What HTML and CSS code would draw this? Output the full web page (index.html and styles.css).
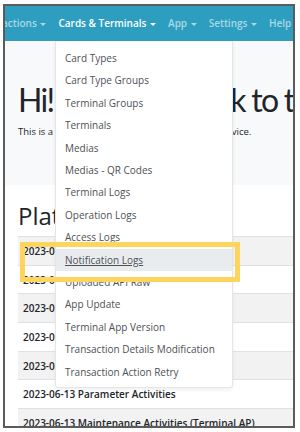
FILE: index.html
```html
<!DOCTYPE html>
<html lang="en">
<head>
  <meta charset="UTF-8" />
  <meta name="viewport" content="width=device-width, initial-scale=1.0" />
  <title>Platform Home</title>
  <link rel="stylesheet" href="styles.css">
</head>
<body>
  <div class="frame">
    <nav class="navbar">
      <ul class="nav">
        <li>Transactions <span class="caret"></span></li>
        <li class="active">Cards &amp; Terminals <span class="caret"></span></li>
        <li>App <span class="caret"></span></li>
        <li>Settings <span class="caret"></span></li>
        <li>Help</li>
      </ul>
    </nav>

    <div class="jumbotron">
      <h1>Hi! Welcome back to the platform</h1>
      <p>This is a management portal for the terminal service.</p>
    </div>

    <div class="updates">
      <h3>Platform Updates</h3>
      <table class="table">
        <tr><td>2023-07-05 Notification Logs</td></tr>
        <tr><td>2023-07-05 Uploaded API Raw</td></tr>
        <tr><td>2023-06-28 App Update</td></tr>
        <tr><td>2023-06-28 Terminal App Version</td></tr>
        <tr><td>2023-06-20 Transaction Retry</td></tr>
        <tr><td>2023-06-13 Parameter Activities</td></tr>
        <tr><td>2023-06-13 Maintenance Activities (Terminal AP)</td></tr>
      </table>
    </div>

    <div class="dropdown">
      <a>Card Types</a>
      <a>Card Type Groups</a>
      <a>Terminal Groups</a>
      <a>Terminals</a>
      <a>Medias</a>
      <a>Medias - QR Codes</a>
      <a>Terminal Logs</a>
      <a>Operation Logs</a>
      <a>Access Logs</a>
      <a class="hover">Notification Logs</a>
      <a>Uploaded API Raw</a>
      <a>App Update</a>
      <a>Terminal App Version</a>
      <a>Transaction Details Modification</a>
      <a>Transaction Action Retry</a>
    </div>

    <div class="callout"></div>
  </div>
</body>
</html>
```

FILE: styles.css
```css
:root {
  --teal: #2d9ebf;
  --text: #212529;
  --muted: #4d5156;
  --stripe: #f2f2f2;
  --border: #dee2e6;
}

* {
  box-sizing: border-box;
}

body {
  margin: 0;
  background: #ffffff;
  font-family: 'Open Sans', 'Noto Sans', sans-serif;
  color: var(--text);
}

.frame {
  position: relative;
  margin: 4px 5px 0 3px;
  height: 424px;
  border: 2px solid #5b5b5b;
  overflow: hidden;
  background: #ffffff;
}

.navbar {
  height: 35px;
  background: var(--teal);
  overflow: hidden;
}

.nav {
  display: flex;
  gap: 12px;
  margin: 0 0 0 -30px;
  padding: 0;
  list-style: none;
  white-space: nowrap;
}

.nav li {
  line-height: 35px;
  font-size: 10px;
  font-weight: 600;
  color: rgba(255, 255, 255, 0.6);
}

.nav li.active {
  color: #ffffff;
}

.caret {
  display: inline-block;
  vertical-align: middle;
  margin-left: 1px;
  border-top: 3px solid currentColor;
  border-left: 3px solid transparent;
  border-right: 3px solid transparent;
}

.jumbotron {
  height: 144px;
  background: #f8f9fa;
  padding: 40px 13px 0;
}

.jumbotron h1 {
  margin: 0;
  font-family: Lato, 'Open Sans', sans-serif;
  font-size: 32px;
  font-weight: 400;
  line-height: 38px;
  letter-spacing: -1.7px;
  white-space: nowrap;
}

.jumbotron p {
  margin: 6px 0 0;
  font-size: 9.5px;
  white-space: nowrap;
}

.updates {
  padding: 17px 0 0 13px;
}

.updates h3 {
  margin: 0 0 6px;
  font-size: 24px;
  font-weight: 500;
  line-height: 28px;
}

.table {
  width: 320px;
  border-collapse: collapse;
}

.table td {
  height: 28.7px;
  padding: 0 5px;
  border-top: 1px solid var(--border);
  font-size: 10px;
  font-weight: 600;
  white-space: nowrap;
}

.table tr:nth-child(odd) td {
  background: var(--stripe);
}

.dropdown {
  position: absolute;
  left: 50px;
  top: 35px;
  width: 178px;
  padding: 6px 0 4px;
  background: #ffffff;
  border: 1px solid rgba(0, 0, 0, 0.1);
  border-top: none;
  border-radius: 0 0 3px 3px;
  box-shadow: 0 2px 4px rgba(0, 0, 0, 0.06);
}

.dropdown a {
  display: block;
  padding: 0 9px;
  line-height: 22.4px;
  font-size: 10px;
  color: var(--muted);
  white-space: nowrap;
}

.dropdown a.hover {
  background: #e9ecef;
  text-decoration: underline;
}

.callout {
  position: absolute;
  left: 15px;
  top: 236px;
  width: 220px;
  height: 40px;
  border: 5px solid #fdd55c;
}
```
